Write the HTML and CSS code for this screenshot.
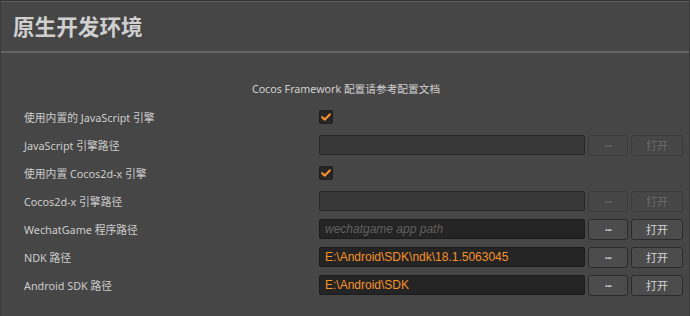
FILE: index.html
```html
<!DOCTYPE html>
<html lang="zh">
<head>
<meta charset="utf-8">
<title>原生开发环境</title>
<link rel="stylesheet" href="styles.css">
</head>
<body>
<div class="panel">
  <header class="header"><h1 class="title">原生开发环境</h1></header>
  <div class="sep"></div>
  <div class="content">
    <p class="note">Cocos Framework 配置请参考配置文档</p>
    <div class="rows">
      <div class="row">
        <span class="label">使用内置的 JavaScript 引擎</span>
        <div class="ctrl"><span class="check"><svg viewBox="0 0 14 14" width="14" height="14"><path d="M3.2 7.2 L5.8 9.6 L10.8 4.4" fill="none" stroke="#f7922a" stroke-width="2.2" stroke-linecap="round" stroke-linejoin="round"/></svg></span></div>
      </div>
      <div class="row">
        <span class="label">JavaScript 引擎路径</span>
        <div class="ctrl">
          <span class="input disabled"></span>
          <span class="btn dots disabled">···</span>
          <span class="btn open disabled">打开</span>
        </div>
      </div>
      <div class="row">
        <span class="label">使用内置 Cocos2d-x 引擎</span>
        <div class="ctrl"><span class="check"><svg viewBox="0 0 14 14" width="14" height="14"><path d="M3.2 7.2 L5.8 9.6 L10.8 4.4" fill="none" stroke="#f7922a" stroke-width="2.2" stroke-linecap="round" stroke-linejoin="round"/></svg></span></div>
      </div>
      <div class="row">
        <span class="label">Cocos2d-x 引擎路径</span>
        <div class="ctrl">
          <span class="input disabled"></span>
          <span class="btn dots disabled">···</span>
          <span class="btn open disabled">打开</span>
        </div>
      </div>
      <div class="row">
        <span class="label">WechatGame 程序路径</span>
        <div class="ctrl">
          <span class="input"><span class="placeholder">wechatgame app path</span></span>
          <span class="btn dots">···</span>
          <span class="btn open">打开</span>
        </div>
      </div>
      <div class="row">
        <span class="label">NDK 路径</span>
        <div class="ctrl">
          <span class="input"><span class="value">E:\Android\SDK\ndk\18.1.5063045</span></span>
          <span class="btn dots">···</span>
          <span class="btn open">打开</span>
        </div>
      </div>
      <div class="row">
        <span class="label">Android SDK 路径</span>
        <div class="ctrl">
          <span class="input"><span class="value">E:\Android\SDK</span></span>
          <span class="btn dots">···</span>
          <span class="btn open">打开</span>
        </div>
      </div>
    </div>
  </div>
</div>
</body>
</html>
```

FILE: styles.css
```css
html, body {
  margin: 0;
  padding: 0;
  background: #464646;
}
body {
  font-family: "Noto Sans", "Noto Sans CJK SC", sans-serif;
  color: #cccccc;
  width: 690px;
  height: 316px;
  overflow: hidden;
}
.panel {
  box-sizing: border-box;
  width: 690px;
  height: 316px;
  border-top: 1px solid #333333;
  border-left: 1px solid #3a3a3a;
  border-right: 1px solid #3a3a3a;
  box-shadow: inset 0 1px 0 #5c5c5c;
  background: #464646;
}
.header {
  height: 50px;
  display: flex;
  align-items: center;
  padding-left: 12px;
}
.title {
  margin: 0;
  font-family: "Noto Sans CJK SC", sans-serif;
  font-size: 21.6px;
  font-weight: 700;
  color: #cfcfcf;
  line-height: 28px;
  letter-spacing: 0;
}
.sep {
  height: 2px;
  background: #646464;
}
.content {
  padding-top: 27px;
}
.note {
  margin: 0;
  text-align: center;
  font-size: 10.7px;
  line-height: 18px;
  color: #d0d0d0;
  padding-left: 2px;
}
.rows {
  margin-top: 5px;
  display: flex;
  flex-direction: column;
}
.row {
  height: 28px;
  display: grid;
  grid-template-columns: 295px 1fr;
  align-items: center;
  padding-left: 23px;
  padding-right: 6px;
}
.label {
  font-size: 10.8px;
  color: #cdcdcd;
  line-height: 16px;
  white-space: nowrap;
  padding-top: 2px;
}
.ctrl {
  display: flex;
  align-items: center;
  gap: 3px;
}
.check {
  width: 14px;
  height: 14px;
  box-sizing: border-box;
  border-radius: 3px;
  background: #262626;
  box-shadow: inset 0 0 0 1px #1f1f1f;
  display: flex;
}
.input {
  box-sizing: border-box;
  width: 266px;
  height: 20px;
  border: 1px solid #1b1b1b;
  border-radius: 2px;
  background: #242424;
  display: flex;
  align-items: center;
  padding-left: 5px;
  font-family: "Liberation Sans", Arial, sans-serif;
  font-size: 12px;
}
.input.disabled {
  background: #383838;
  border-color: #272727;
}
.value {
  color: #f7922a;
}
.placeholder {
  color: #606060;
  font-style: italic;
}
.btn {
  box-sizing: border-box;
  height: 21px;
  border: 1px solid #2b2b2b;
  border-radius: 3px;
  background: #4c4c4c;
  display: flex;
  align-items: center;
  justify-content: center;
  color: #d6d6d6;
  font-size: 11px;
}
.btn.dots {
  width: 40px;
  font-size: 11px;
  font-weight: 700;
  letter-spacing: -1px;
}
.btn.open {
  width: 52px;
  font-family: "Noto Sans CJK SC", sans-serif;
}
.btn.disabled {
  background: #464646;
  border-color: #3a3a3a;
  color: #6a6a6a;
}
```
